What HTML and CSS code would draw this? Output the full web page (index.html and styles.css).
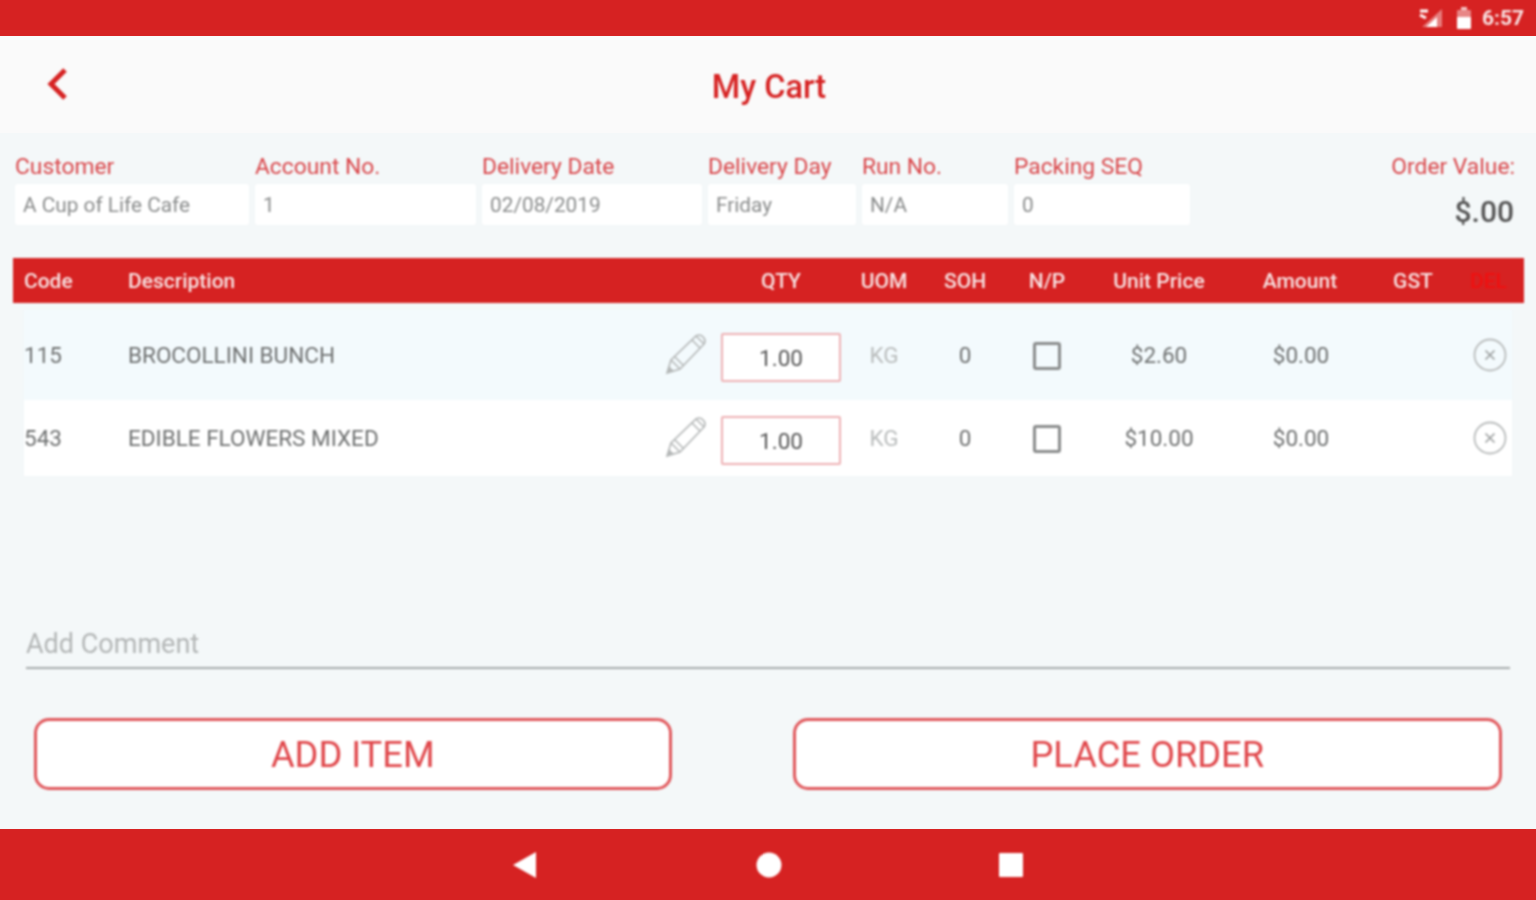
FILE: index.html
```html
<!DOCTYPE html>
<html lang="en">
<head>
    <meta charset="UTF-8">
    <meta name="viewport" content="width=device-width, initial-scale=1.0">
    <title>My Cart</title>
    <link rel="stylesheet" href="styles.css">
</head>
<body>
    <div class="page">
        <div class="status-bar">
            <svg class="status-signal soft" width="28" height="24" viewBox="0 0 28 24">
                <path d="M4 21 L24 3 V21 Z" fill="#f4c9c9" opacity="0.55"/>
                <path d="M8 21 L19 11 V21 Z" fill="#fff"/>
                <path d="M2 5 L10 5 M2 9 L8 12" stroke="#fff" stroke-width="3"/>
            </svg>
            <svg class="status-battery soft" width="16" height="24" viewBox="0 0 16 24">
                <rect x="5" y="1" width="6" height="3" fill="#f4c9c9"/>
                <rect x="1" y="4" width="14" height="19" rx="1" fill="#f4c9c9" opacity="0.6"/>
                <rect x="1" y="11" width="14" height="12" rx="1" fill="#fff"/>
            </svg>
            <span class="status-time soft">6:57</span>
        </div>

        <header class="app-bar">
            <svg class="back-icon soft" width="24" height="36" viewBox="0 0 24 36">
                <path d="M20 4 L6 18 L20 32" fill="none" stroke="#d62222" stroke-width="5"/>
            </svg>
            <h1 class="soft">My Cart</h1>
        </header>

        <main class="content">
            <section class="order-info soft">
                <div class="field field-customer">
                    <label>Customer</label>
                    <div class="field-box">A Cup of Life Cafe</div>
                </div>
                <div class="field field-account">
                    <label>Account No.</label>
                    <div class="field-box">1</div>
                </div>
                <div class="field field-date">
                    <label>Delivery Date</label>
                    <div class="field-box">02/08/2019</div>
                </div>
                <div class="field field-day">
                    <label>Delivery Day</label>
                    <div class="field-box">Friday</div>
                </div>
                <div class="field field-run">
                    <label>Run No.</label>
                    <div class="field-box">N/A</div>
                </div>
                <div class="field field-seq">
                    <label>Packing SEQ</label>
                    <div class="field-box">0</div>
                </div>
                <div class="order-value">
                    <label>Order Value:</label>
                    <div class="order-total">$.00</div>
                </div>
            </section>

            <section class="cart-table soft">
                <div class="cart-head">
                    <span>Code</span>
                    <span>Description</span>
                    <span class="center">QTY</span>
                    <span class="center">UOM</span>
                    <span class="center">SOH</span>
                    <span class="center">N/P</span>
                    <span class="center">Unit Price</span>
                    <span class="center">Amount</span>
                    <span class="center">GST</span>
                    <span class="center del-head">DEL</span>
                </div>

                <div class="cart-row row-first">
                    <span>115</span>
                    <div class="desc">
                        <span>BROCOLLINI BUNCH</span>
                        <svg class="pencil" width="42" height="42" viewBox="0 0 42 42">
                            <path d="M2 40 L6 27 L31 3 Q34 1 37 3 L39 5 Q41 8 39 11 L15 36 Z M6 27 L15 36 M10 24 L18 32 M27 7 L35 15 M31 3 L39 11" fill="none" stroke="#b5b8b8" stroke-width="1.6"/>
                            <path d="M2 40 L4 33 L9 38 Z" fill="#b5b8b8"/>
                        </svg>
                    </div>
                    <div class="qty-box">1.00</div>
                    <span class="center uom">KG</span>
                    <span class="center">0</span>
                    <div class="center"><span class="checkbox"></span></div>
                    <span class="center">$2.60</span>
                    <span class="center amount">$0.00</span>
                    <span></span>
                    <div class="center del-cell">
                        <svg width="34" height="34" viewBox="0 0 34 34">
                            <circle cx="17" cy="17" r="15.5" fill="none" stroke="#b9bcbc" stroke-width="1.8"/>
                            <path d="M12.5 12.5 L21.5 21.5 M21.5 12.5 L12.5 21.5" stroke="#9a9d9d" stroke-width="1.6"/>
                        </svg>
                    </div>
                </div>

                <div class="cart-row row-second">
                    <span>543</span>
                    <div class="desc">
                        <span>EDIBLE FLOWERS MIXED</span>
                        <svg class="pencil" width="42" height="42" viewBox="0 0 42 42">
                            <path d="M2 40 L6 27 L31 3 Q34 1 37 3 L39 5 Q41 8 39 11 L15 36 Z M6 27 L15 36 M10 24 L18 32 M27 7 L35 15 M31 3 L39 11" fill="none" stroke="#b5b8b8" stroke-width="1.6"/>
                            <path d="M2 40 L4 33 L9 38 Z" fill="#b5b8b8"/>
                        </svg>
                    </div>
                    <div class="qty-box">1.00</div>
                    <span class="center uom">KG</span>
                    <span class="center">0</span>
                    <div class="center"><span class="checkbox"></span></div>
                    <span class="center">$10.00</span>
                    <span class="center amount">$0.00</span>
                    <span></span>
                    <div class="center del-cell">
                        <svg width="34" height="34" viewBox="0 0 34 34">
                            <circle cx="17" cy="17" r="15.5" fill="none" stroke="#b9bcbc" stroke-width="1.8"/>
                            <path d="M12.5 12.5 L21.5 21.5 M21.5 12.5 L12.5 21.5" stroke="#9a9d9d" stroke-width="1.6"/>
                        </svg>
                    </div>
                </div>
            </section>

            <div class="comment soft">Add Comment</div>

            <div class="actions soft">
                <button class="btn btn-add">ADD ITEM</button>
                <button class="btn btn-place">PLACE ORDER</button>
            </div>
        </main>

        <footer class="nav-bar">
            <svg class="nav-back soft" width="26" height="28" viewBox="0 0 26 28"><path d="M25 1 V27 L2 14 Z" fill="#fff"/></svg>
            <svg class="soft" width="26" height="26" viewBox="0 0 26 26"><circle cx="13" cy="13" r="12.5" fill="#fff"/></svg>
            <svg class="nav-recent soft" width="24" height="24" viewBox="0 0 24 24"><rect x="0" y="0" width="24" height="24" rx="1" fill="#fff"/></svg>
        </footer>
    </div>
</body>
</html>
```

FILE: styles.css
```css
html, body {
    margin: 0;
    padding: 0;
}

body {
    font-family: Roboto, "Liberation Sans", sans-serif;
    background-color: #f4f8f9;
    overflow: hidden;
}

.page {
    width: 1536px;
    height: 900px;
    display: flex;
    flex-direction: column;
}

/* the reference is an upscaled capture, everything in it is a little soft */
.soft {
    filter: blur(0.8px);
}

/* Status bar */
.status-bar {
    height: 36px;
    background-color: #d62222;
    display: flex;
    align-items: center;
    justify-content: flex-end;
    padding-right: 12px;
    box-sizing: border-box;
}

.status-signal {
    margin-right: 10px;
    margin-left: -2px;
}

.status-battery {
    margin-right: 10px;
}

.status-time {
    color: #f8e4e4;
    font-size: 21px;
    font-weight: 700;
}

/* Title bar */
.app-bar {
    height: 97px;
    background-color: #fafafa;
    position: relative;
    display: flex;
    align-items: center;
    justify-content: center;
}

.app-bar h1 {
    margin: 0 0 -5px 2px;
    color: #d62222;
    font-size: 32.5px;
    font-weight: 500;
}

.back-icon {
    position: absolute;
    left: 45px;
    top: 30px;
}

.content {
    flex: 1;
    display: flex;
    flex-direction: column;
}

/* Order details */
.order-info {
    display: flex;
    gap: 6px;
    padding: 20px 21px 0 15px;
}

.field label,
.order-value label {
    display: block;
    color: #d9464a;
    font-size: 22.8px;
    line-height: 27px;
    margin-bottom: 4px;
    white-space: nowrap;
}

.field-box {
    height: 41px;
    line-height: 43px;
    background-color: #fff;
    border-radius: 3px;
    padding-left: 8px;
    color: #8a8c8c;
    font-size: 20.8px;
    box-sizing: border-box;
}

.field-customer { width: 234px; }
.field-account { width: 221px; }
.field-date { width: 220px; }
.field-day { width: 148px; }
.field-run { width: 146px; }
.field-seq { width: 176px; }

.order-value {
    flex: 1;
    text-align: right;
}

.order-total {
    color: #555;
    font-size: 30px;
    font-weight: 500;
    line-height: 41px;
    padding: 7px 1px 0 0;
}

/* Table */
.cart-table {
    margin: 26px 12px 0 13px;
}

.cart-head,
.cart-row {
    display: grid;
    grid-template-columns: 104px 593px 120px 86px 76px 88px 136px 146px 80px 59px;
    align-items: center;
}

.cart-head {
    height: 45px;
    padding: 0 12px 0 11px;
    background-color: #d62222;
    color: #f8e4e4;
    font-size: 21px;
    font-weight: 500;
}

.cart-row {
    margin: 0 12px 0 11px;
    color: #6f7171;
    font-size: 22.5px;
}

.row-first {
    margin-top: 7px;
    height: 90px;
    background-color: #f3fafd;
}

.row-second {
    height: 76px;
    background-color: #fff;
}

.center {
    text-align: center;
}

.amount {
    padding-left: 2px;
}

.del-head {
    color: #f01010;
    padding-left: 12px;
}

.del-cell {
    padding-left: 15px;
    display: flex;
    justify-content: center;
}

.desc {
    display: flex;
    align-items: center;
    justify-content: space-between;
    padding-right: 14px;
}

.pencil {
    margin-top: -2px;
}

.qty-box {
    width: 120px;
    height: 49px;
    line-height: 47px;
    margin-top: 5px;
    background-color: #fff;
    border: 2px solid #eeb1b4;
    border-radius: 2px;
    box-sizing: border-box;
    text-align: center;
    color: #555;
}

.uom {
    color: #b9bcbc;
}

.checkbox {
    display: inline-block;
    width: 28px;
    height: 28px;
    border: 3px solid #8a8c8c;
    border-radius: 3px;
    box-sizing: border-box;
    vertical-align: middle;
}

/* Comment */
.comment {
    margin: 147px 26px 0 26px;
    height: 46px;
    line-height: 42px;
    border-bottom: 2px solid #a7abab;
    box-sizing: border-box;
    color: #b3b6b6;
    font-size: 27px;
}

/* Buttons */
.actions {
    display: flex;
    gap: 121px;
    padding: 49px 34px 0 34px;
}

.btn {
    height: 72px;
    background-color: #fff;
    border: 3px solid #e0575b;
    border-radius: 15px;
    color: #e0474b;
    font-family: inherit;
    font-size: 36.3px;
    box-sizing: border-box;
}

.btn-add { width: 638px; }
.btn-place { width: 710px; }

/* Bottom navigation */
.nav-bar {
    height: 71px;
    background-color: #d62222;
    display: flex;
    align-items: center;
    justify-content: center;
    gap: 216px;
    padding-right: 2px;
}

.nav-back {
    margin-right: 3px;
}

.nav-recent {
    margin-left: 1px;
}
```
